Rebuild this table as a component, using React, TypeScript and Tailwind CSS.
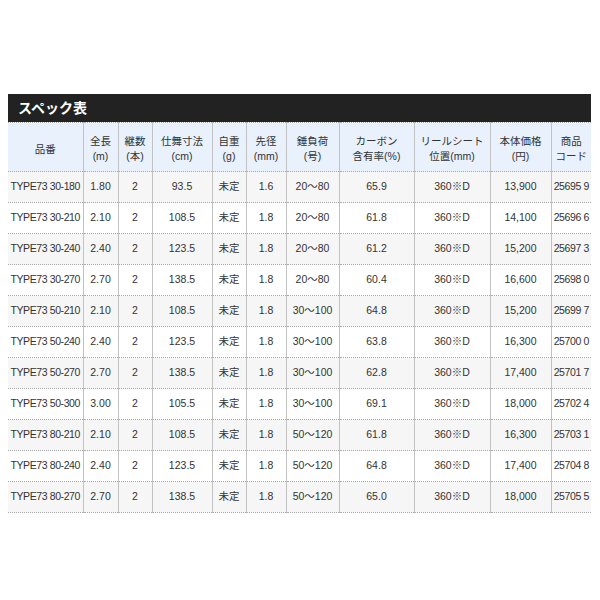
import React from 'react';

type Row = [string, string, string, string, string, string, string, string, string, string, string];

const HEADERS: { lines: string[]; width: number }[] = [
  { lines: ['品番'], width: 75 },
  { lines: ['全長', '(m)'], width: 35 },
  { lines: ['継数', '(本)'], width: 34 },
  { lines: ['仕舞寸法', '(cm)'], width: 60 },
  { lines: ['自重', '(g)'], width: 34 },
  { lines: ['先径', '(mm)'], width: 40 },
  { lines: ['錘負荷', '(号)'], width: 53 },
  { lines: ['カーボン', '含有率(%)'], width: 75 },
  { lines: ['リールシート', '位置(mm)'], width: 76 },
  { lines: ['本体価格', '(円)'], width: 61 },
  { lines: ['商品', 'コード'], width: 40 },
];

const ROWS: Row[] = [
  ['TYPE73 30-180', '1.80', '2', '93.5', '未定', '1.6', '20〜80', '65.9', '360※D', '13,900', '25695 9'],
  ['TYPE73 30-210', '2.10', '2', '108.5', '未定', '1.8', '20〜80', '61.8', '360※D', '14,100', '25696 6'],
  ['TYPE73 30-240', '2.40', '2', '123.5', '未定', '1.8', '20〜80', '61.2', '360※D', '15,200', '25697 3'],
  ['TYPE73 30-270', '2.70', '2', '138.5', '未定', '1.8', '20〜80', '60.4', '360※D', '16,600', '25698 0'],
  ['TYPE73 50-210', '2.10', '2', '108.5', '未定', '1.8', '30〜100', '64.8', '360※D', '15,200', '25699 7'],
  ['TYPE73 50-240', '2.40', '2', '123.5', '未定', '1.8', '30〜100', '63.8', '360※D', '16,300', '25700 0'],
  ['TYPE73 50-270', '2.70', '2', '138.5', '未定', '1.8', '30〜100', '62.8', '360※D', '17,400', '25701 7'],
  ['TYPE73 50-300', '3.00', '2', '105.5', '未定', '1.8', '30〜100', '69.1', '360※D', '18,000', '25702 4'],
  ['TYPE73 80-210', '2.10', '2', '108.5', '未定', '1.8', '50〜120', '61.8', '360※D', '16,300', '25703 1'],
  ['TYPE73 80-240', '2.40', '2', '123.5', '未定', '1.8', '50〜120', '64.8', '360※D', '17,400', '25704 8'],
  ['TYPE73 80-270', '2.70', '2', '138.5', '未定', '1.8', '50〜120', '65.0', '360※D', '18,000', '25705 5'],
];

// vertical rules are solid, horizontal ones dotted
const cellBorder = 'border-x border-x-[#c2c2c2] first:border-l-0 last:border-r-0';

export default function App() {
  return (
    <div
      className="min-h-[600px] bg-white px-2 pt-[94px] text-[#333]"
      style={{ fontFamily: '"Liberation Sans", "Noto Sans CJK JP", sans-serif' }}
    >
      <div className="w-[583px]">
        <div className="flex h-[28px] items-center bg-[#222] pl-[10px] text-[14px] font-bold text-white">
          スペック表
        </div>
        <table className="w-[583px] table-fixed border-collapse text-[10.5px]">
          <colgroup>
            {HEADERS.map((h, i) => (
              <col key={i} style={{ width: h.width }} />
            ))}
          </colgroup>
          <thead>
            <tr className="h-[49px] border-y border-dotted border-y-[#aaa] bg-[#e8f1fc]">
              {HEADERS.map((h, i) => (
                <th key={i} className={`${cellBorder} p-0 pt-[4px] text-center align-middle font-normal leading-[15px]`}>
                  {h.lines.map((l) => (
                    <div key={l} className="whitespace-nowrap">{l}</div>
                  ))}
                </th>
              ))}
            </tr>
          </thead>
          <tbody>
            {ROWS.map((r, ri) => (
              <tr
                key={ri}
                className={`h-[31px] border-b border-dotted border-b-[#aaa] ${ri % 2 === 0 ? 'bg-[#f6f6f6]' : 'bg-white'}`}
              >
                {r.map((c, ci) => (
                  <td
                    key={ci}
                    className={`${cellBorder} whitespace-nowrap p-0 text-center align-middle ${
                      ci === 0 || ci === 10 ? 'tracking-[-0.4px]' : ''
                    }`}
                  >
                    {c}
                  </td>
                ))}
              </tr>
            ))}
          </tbody>
        </table>
      </div>
    </div>
  );
}
